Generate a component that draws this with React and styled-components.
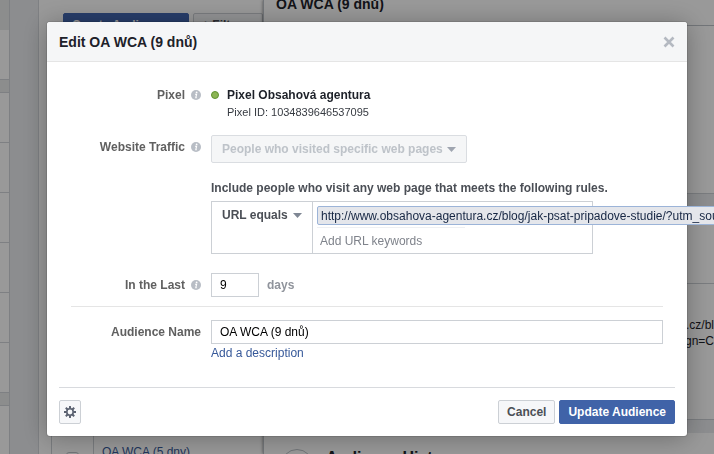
import styled, { createGlobalStyle } from 'styled-components';

const GlobalStyle = createGlobalStyle`
  * { box-sizing: border-box; }
  body {
    margin: 0;
    overflow: hidden;
    font-family: "Liberation Sans", Arial, sans-serif;
    font-size: 12px;
    line-height: 16px;
    color: #4b4f56;
    background: #e9ebee;
  }
  button, input, select { font: inherit; color: inherit; margin: 0; }
`

/* page behind the dialog */
const Page = styled.div`
  display: flex;
  height: 100vh;
  overflow: hidden;
`
const Rail = styled.nav`
  flex: 0 0 10px;
  border-right: 1px solid #d3d6db;
  background: #fff;
`
const RailRow = styled.div`
  height: ${(p) => p.$h}px;
  border-bottom: 1px solid ${(p) => (p.$plain ? '#e9eceb' : '#d3d6db')};
  background: ${(p) => (p.$gap ? '#e9eceb' : '#fff')};
`
const List = styled.section`
  flex: 0 0 225px;
  display: flex;
  flex-direction: column;
  justify-content: space-between;
  margin-left: 28px;
  padding: 13px 0 0 12px;
  background: #fff;
  border-left: 1px solid #d3d6db;
`
const Toolbar = styled.div`
  display: flex;
  gap: 4px;
  padding-left: 12px;
`
const ToolButton = styled.button`
  height: 24px;
  padding: 0 8px;
  border: 1px solid ${(p) => (p.$primary ? '#4267b2' : '#ccd0d5')};
  border-radius: 2px;
  background: ${(p) => (p.$primary ? '#4267b2' : '#f6f7f9')};
  color: ${(p) => (p.$primary ? '#fff' : '#4b4f56')};
  flex: ${(p) => (p.$primary ? '0 0 126px' : '1')};
  font-weight: bold;
  text-align: left;
  white-space: nowrap;
`
const ListRow = styled.div`
  display: flex;
  height: 24px;
  border-left: 1px solid #ccd0d5;
`
const CheckCell = styled.div`
  flex: 0 0 42px;
  padding: 22px 0 0 14px;
  border-right: 1px solid #ccd0d5;
`
const Checkbox = styled.input`
  appearance: none;
  display: block;
  width: 13px;
  height: 13px;
  border: 1px solid #bec3c9;
  border-radius: 3px;
`
const RowLink = styled.a`
  padding: 14px 8px 0;
  color: #365899;
  text-decoration: none;
  white-space: nowrap;
`
const Detail = styled.section`
  flex: 1;
  min-width: 0;
  border-left: 1px solid #bec3c9;
  background: #e9ebee;
  box-shadow: 0 0 3px rgba(0, 0, 0, 0.5);
`
const DetailHead = styled.h2`
  height: 26px;
  margin: 0;
  padding: 0 0 0 12px;
  border-bottom: 1px solid #bec3c9;
  background: #fff;
  font-size: 14px;
  line-height: 8px;
  color: #1d2129;
`
const Card = styled.div`
  height: ${(p) => p.$h}px;
  margin-bottom: 13px;
  border-bottom: 1px solid #ccd0d5;
  background: #fff;
`
const CardRow = styled.div`
  height: 77px;
  border-bottom: 1px solid #ccd0d5;
`
const CardText = styled.p`
  margin: 0;
  padding: 33px 0 0 12px;
  text-align: right;
  color: #1d2129;
  white-space: nowrap;
`
const History = styled.div`
  display: flex;
  gap: 13px;
  padding: 16px 0 0 17px;
  h3 {
    margin: 0;
    font-size: 16px;
    line-height: 18px;
    color: #1d2129;
  }
`
const Circle = styled.div`
  width: 32px;
  height: 32px;
  border: 1px solid #bec3c9;
  border-radius: 50%;
`

/* dialog */
const Overlay = styled.div`
  position: fixed;
  inset: 0;
  padding: 22px 27px 18px 47px;
  background: rgba(0, 0, 0, 0.4);
`
const Dialog = styled.form`
  border-radius: 3px;
  background: #fff;
  box-shadow: 0 2px 26px rgba(0, 0, 0, 0.3), 0 0 0 1px rgba(0, 0, 0, 0.1);
`
const Header = styled.header`
  display: flex;
  align-items: center;
  justify-content: space-between;
  height: 40px;
  padding: 0 12px;
  border-bottom: 1px solid #e5e5e5;
  border-radius: 3px 3px 0 0;
  background: #f5f6f7;
  h1 {
    margin: 0;
    font-size: 14px;
    line-height: 18px;
    color: #1d2129;
  }
`
const CloseButton = styled.button`
  display: flex;
  padding: 0;
  border: 0;
  background: none;
  color: #b4b9c1;
`
const Body = styled.div`
  padding: 25px 24px 26px;
`
const Field = styled.div`
  display: grid;
  grid-template-columns: 130px 1fr;
  column-gap: 10px;
  align-items: start;
  margin-bottom: ${(p) => p.$gap || 0}px;
`
const Label = styled.label`
  display: flex;
  justify-content: flex-end;
  align-items: center;
  gap: 6px;
  padding-top: ${(p) => (p.$top ? 4 : 0)}px;
  font-weight: bold;
  color: #606060;
`
const PixelName = styled.div`
  display: grid;
  grid-template-columns: 8px 1fr;
  column-gap: 8px;
  align-items: center;
  strong { color: #1d2129; }
  small {
    grid-column: 2;
    font-size: 11px;
    line-height: 18px;
    color: #373b42;
  }
`
const Dot = styled.i`
  width: 8px;
  height: 8px;
  border: 1px solid #5f9130;
  border-radius: 50%;
  background: #8cb554;
`
const Picker = styled.div`
  display: inline-flex;
  align-items: center;
  gap: 4px;
  height: 28px;
  padding: 0 10px;
  border: 1px solid #dadde1;
  border-radius: 2px;
  background: #f5f6f7;
  color: #bec3c9;
`
const Select = styled.select`
  appearance: none;
  padding: 0;
  border: 0;
  background: none;
  font-weight: bold;
  opacity: 1;
`
const RulesTitle = styled.div`
  margin-bottom: 5px;
  font-weight: bold;
`
const Rule = styled.div`
  display: grid;
  grid-template-columns: 101px minmax(0, 1fr);
  max-width: 382px;
  height: 53px;
  border: 1px solid #ccd0d5;
`
const RuleType = styled.div`
  display: flex;
  align-items: flex-start;
  gap: 4px;
  padding: 5px 0 0 10px;
  border-right: 1px solid #ccd0d5;
  svg { margin-top: 6px; }
`
const Keywords = styled.div`
  padding: 4px 4px 0;
`
const Token = styled.span`
  display: block;
  width: max-content;
  height: 19px;
  padding: 0 3px;
  border: 1px solid #9cb4d8;
  border-radius: 2px;
  background: #e4e6eb;
  line-height: 18px;
  color: #162643;
  white-space: nowrap;
`
const KeywordInput = styled.input`
  display: block;
  width: 148px;
  height: 24px;
  margin-top: 2px;
  padding: 2px 3px 0;
  border: 0;
  border-top: 1px solid #eef0f3;
  background: none;
  &::placeholder { color: #7f838b; opacity: 1; }
`
const TextInput = styled.input`
  width: ${(p) => p.$w || '100%'};
  height: 24px;
  padding: 0 8px;
  border: 1px solid #ccd0d5;
  background: #fff;
  color: #000;
`
const Days = styled.div`
  display: flex;
  align-items: center;
  gap: 8px;
  font-weight: bold;
  color: #90949c;
  input { font-weight: normal; }
`
const Line = styled.hr`
  height: 1px;
  margin: 9px 0 13px;
  border: 0;
  background: #e5e5e5;
`
const Description = styled.a`
  display: inline-block;
  margin-top: 1px;
  color: #365899;
  text-decoration: none;
`
const Footer = styled.footer`
  display: flex;
  gap: 4px;
  margin: 0 12px;
  padding: 12px 0;
  border-top: 1px solid #d8dade;
`
const Button = styled.button`
  display: flex;
  align-items: center;
  height: 24px;
  padding: 0 8px;
  border: 1px solid ${(p) => (p.$primary ? '#4063a8' : '#ccd0d5')};
  border-radius: 2px;
  background: ${(p) => (p.$primary ? '#4063a8' : '#f6f7f9')};
  color: ${(p) => (p.$primary ? '#fff' : '#4b4f56')};
  font-weight: bold;
`
const GearButton = styled(Button)`
  width: 22px;
  padding: 0;
  justify-content: center;
  margin-right: auto;
`

function Info() {
  return (
    <svg width="10" height="10" viewBox="0 0 10 10">
      <circle cx="5" cy="5" r="5" fill="#b8bdc5" />
      <circle cx="5.6" cy="2.4" r="0.9" fill="#fff" />
      <path d="M4 4.2h1.6L4.8 7.7h1" stroke="#fff" strokeWidth="1.1" fill="none" />
    </svg>
  );
}

function Caret({ color = '#7f8794' }) {
  return (
    <svg width="9" height="5" viewBox="0 0 9 5">
      <path d="M0 0h9L4.5 5z" fill={color} />
    </svg>
  );
}

function Gear() {
  const teeth = [0, 45, 90, 135, 180, 225, 270, 315];
  return (
    <svg width="12" height="12" viewBox="0 0 12 12">
      <circle cx="6" cy="6" r="3.2" fill="none" stroke="#5a6170" strokeWidth="1.6" />
      {teeth.map((a) => (
        <path key={a} d="M4.9 2.6L5.1 0h1.8l.2 2.6z" fill="#5a6170" transform={`rotate(${a} 6 6)`} />
      ))}
    </svg>
  );
}

const railRows = [
  { h: 30, gap: true, plain: true }, { h: 50 }, { h: 13, gap: true }, { h: 50 }, { h: 50 }, { h: 50 },
  { h: 50 }, { h: 50 }, { h: 50 }, { h: 13, gap: true }, { h: 50 },
];

function Background() {
  return (
    <Page>
      <Rail>
        {railRows.map((r, i) => <RailRow key={i} $h={r.h} $gap={r.gap} $plain={r.plain} />)}
      </Rail>
      <List>
        <Toolbar>
          <ToolButton $primary>Create Audience</ToolButton>
          <ToolButton>+ Filters</ToolButton>
        </Toolbar>
        <ListRow>
          <CheckCell><Checkbox type="checkbox" aria-label="OA WCA (5 dny)" /></CheckCell>
          <RowLink href="#">OA WCA (5 dny)</RowLink>
        </ListRow>
      </List>
      <Detail>
        <DetailHead>OA WCA (9 dnů)</DetailHead>
        <Card $h={168} />
        <Card $h={213}>
          <CardRow />
          <CardText>obsahova-agentura.cz/bl<br />utm_campaign=C</CardText>
        </Card>
        <Card $h={60}>
          <History>
            <Circle />
            <h3>Audience History</h3>
          </History>
        </Card>
      </Detail>
    </Page>
  );
}

function App() {
  return (
    <>
      <GlobalStyle />
      <Background />
      <Overlay>
        <Dialog role="dialog" aria-labelledby="title">
          <Header>
            <h1 id="title">Edit OA WCA (9 dnů)</h1>
            <CloseButton type="button" aria-label="Close">
              <svg width="12" height="12" viewBox="0 0 12 12">
                <path d="M1.500 1.500l9 9M10.500 1.500l-9 9" stroke="currentColor" strokeWidth="2.600" />
              </svg>
            </CloseButton>
          </Header>
          <Body>
            <Field $gap={14}>
              <Label as="div">Pixel <Info /></Label>
              <PixelName>
                <Dot />
                <strong>Pixel Obsahová agentura</strong>
                <small>Pixel ID: 1034839646537095</small>
              </PixelName>
            </Field>
            <Field $gap={17}>
              <Label htmlFor="traffic" $top>Website Traffic <Info /></Label>
              <div>
                <Picker>
                  <Select id="traffic" disabled>
                    <option>People who visited specific web pages</option>
                  </Select>
                  <Caret color="#9fa5b0" />
                </Picker>
              </div>
            </Field>
            <Field $gap={19}>
              <span />
              <div>
                <RulesTitle>Include people who visit any web page that meets the following rules.</RulesTitle>
                <Rule>
                  <RuleType>
                    <Select aria-label="Rule type">
                      <option>URL equals</option>
                    </Select>
                    <Caret />
                  </RuleType>
                  <Keywords>
                    <Token>http://www.obsahova-agentura.cz/blog/jak-psat-pripadove-studie/?utm_source</Token>
                    <KeywordInput placeholder="Add URL keywords" aria-label="Add URL keywords" />
                  </Keywords>
                </Rule>
              </div>
            </Field>
            <Field>
              <Label htmlFor="days" $top>In the Last <Info /></Label>
              <Days>
                <TextInput id="days" $w="48px" defaultValue="9" />
                days
              </Days>
            </Field>
            <Line />
            <Field>
              <Label htmlFor="name" $top>Audience Name</Label>
              <div>
                <TextInput id="name" defaultValue="OA WCA (9 dnů)" />
                <Description href="#">Add a description</Description>
              </div>
            </Field>
          </Body>
          <Footer>
            <GearButton type="button" aria-label="Settings"><Gear /></GearButton>
            <Button type="button">Cancel</Button>
            <Button type="button" $primary>Update Audience</Button>
          </Footer>
        </Dialog>
      </Overlay>
    </>
  );
}

export default App;
